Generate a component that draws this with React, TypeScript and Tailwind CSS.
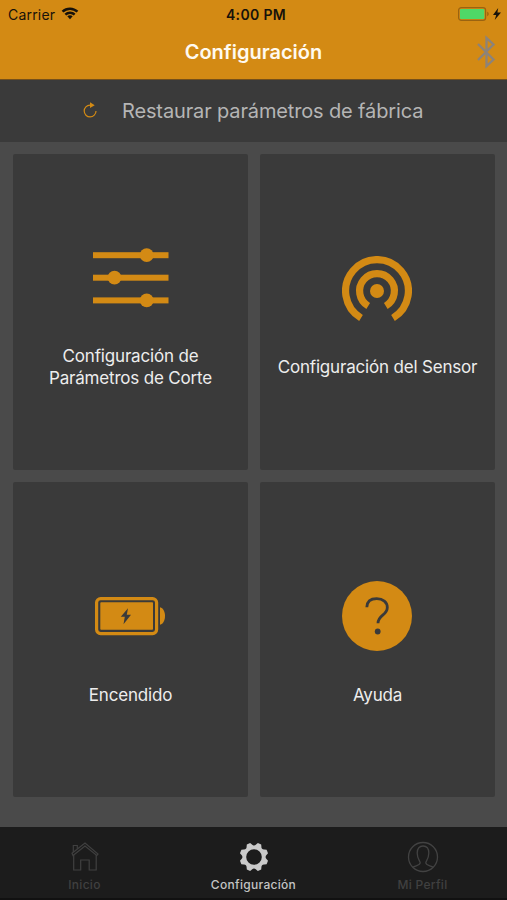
import React from "react";

const WifiIcon = () => (
  <svg width="18" height="14" viewBox="0 0 18 14" fill="#17120a">
    <path d="M9 0.5c3.2 0 6.100 1.250 8.300 3.300l-1.700 1.800A9.700 9.700 0 0 0 9 3a9.700 9.700 0 0 0-6.600 2.600L.7 3.800A12.100 12.100 0 0 1 9 .5Z" />
    <path d="M9 4.500c2.100 0 4 .8 5.500 2.200l-1.700 1.800A5.600 5.600 0 0 0 9 7a5.600 5.600 0 0 0-3.800 1.500L3.500 6.700A8 8 0 0 1 9 4.500Z" />
    <path d="M9 8.300c1 0 2 .4 2.700 1L9 12.300l-2.700-3c.7-.6 1.700-1 2.700-1Z" />
  </svg>
);

const BatteryStatusIcon = () => (
  <svg width="46" height="16" viewBox="0 0 46 16">
    <rect x="1.600" y="1.600" width="27" height="12.800" rx="2.700" fill="none" stroke="#9a6311" strokeWidth="1.200" />
    <rect x="3" y="3" width="24.300" height="10" rx="1" fill="#4fd867" />
    <path d="M30.200 5.800c2 .6 2 3.800 0 4.400Z" fill="#9a6311" />
    <path d="M41.200 2 36 8.900h3.200l-1.500 5 6.300-7.300h-3.600Z" fill="#17120a" />
  </svg>
);

const BluetoothIcon = () => (
  <svg width="20" height="34" viewBox="0 0 20 34" fill="none" stroke="#8c837a" strokeWidth="2.300">
    <path d="M2 9l15.500 15.500L10.500 31V3l7 6.500L2 25" />
  </svg>
);

const RestoreIcon = () => (
  <svg className="mb-[3px]" width="16" height="18" viewBox="0 0 16 18">
    <path d="M8 4.100a5.900 5.900 0 1 0 6 5.900" fill="none" stroke="#d38a14" strokeWidth="1.200" />
    <path d="M8 1.200 12.700 4.200 8 7Z" fill="#d38a14" />
  </svg>
);

const SlidersIcon = () => (
  <svg className="mb-0.5" width="76" height="62" viewBox="0 0 76 62" fill="#d38a14">
    <rect x="0" y="5.200" width="75.500" height="6" />
    <circle cx="53.700" cy="8.200" r="6.900" />
    <rect x="0" y="27.700" width="75.500" height="6" />
    <circle cx="21.500" cy="30.700" r="6.900" />
    <rect x="0" y="50.400" width="75.500" height="6" />
    <circle cx="53.700" cy="53.400" r="6.900" />
  </svg>
);

const SensorIcon = () => (
  <svg className="mt-0.5 mr-px" width="70" height="70" viewBox="0 0 70 70" fill="none" stroke="#d38a14" strokeWidth="7.200">
    <circle cx="35" cy="35" r="7" fill="#d38a14" stroke="none" />
    <path d="M26.200 50a17.400 17.400 0 1 1 17.600 0" />
    <path d="M19 62a31.400 31.400 0 1 1 32 0" />
  </svg>
);

const BatteryIcon = () => (
  <svg className="mb-1" width="72" height="40" viewBox="0 0 72 40">
    <rect x="1.600" y="2.600" width="60" height="35" rx="4" fill="none" stroke="#d38a14" strokeWidth="3.200" />
    <rect x="5.300" y="6.300" width="52.700" height="27.500" rx="0.800" fill="#d38a14" />
    <path d="M65 11.300c6.700 1.500 6.700 16 0 17.500Z" fill="#d38a14" />
    <path d="M33 12.300 25.800 20.800h4l-1.300 7.500 7.500-9.500h-4.200Z" fill="#3a3a3a" />
  </svg>
);

const HelpIcon = () => (
  <svg className="mr-px mb-[3px]" width="70" height="70" viewBox="0 0 70 70">
    <circle cx="35" cy="35" r="35" fill="#d38a14" />
    <path
      d="M24.800 26.300C25 20.500 29 17.700 34.700 17.700c6.300 0 10.600 3.500 10.600 8.700 0 8-9.300 7.500-9.300 15.800"
      fill="none"
      stroke="#3a3a3a"
      strokeWidth="2.800"
    />
    <circle cx="35.700" cy="50.500" r="2.900" fill="#3a3a3a" />
  </svg>
);

const HomeIcon = () => (
  <svg width="28" height="30" viewBox="0 0 28 30" fill="none" stroke="#404040" strokeWidth="1.200">
    <path d="M1 11.300 14 1l13 11-1.200 1.500L14 4 2 13.500Z" />
    <path d="M2.300 10V3.500h4v3.300" />
    <path d="M2.700 13v15h7V18h8.500v10h7V13" />
  </svg>
);

// eight teeth around the rim, offset by half a step
const toothAngles = [22.5, 67.5, 112.5, 157.5, 202.5, 247.5, 292.5, 337.5];

const GearIcon = () => (
  <svg width="30" height="30" viewBox="-15 -15 30 30">
    <circle r="9.700" fill="none" stroke="#cacaca" strokeWidth="3.800" />
    {toothAngles.map((angle) => (
      <path key={angle} d="M-4-10.300-1.800-14.400h3.600L4-10.300Z" fill="#cacaca" transform={`rotate(${angle})`} />
    ))}
  </svg>
);

const ProfileIcon = () => (
  <svg width="32" height="32" viewBox="0 0 32 32" fill="none" stroke="#424242" strokeWidth="1.300">
    <circle cx="16" cy="16" r="14.500" />
    <path d="M5.800 26.300c2.200-1.800 7.400-1.800 7.400-4.500 0-2-3-3.500-3-9.800C10.200 7.300 12.500 5 16 5s5.800 2.300 5.800 7c0 6.300-3 7.800-3 9.800 0 2.700 5.200 2.700 7.400 4.500" />
  </svg>
);

interface CardProps {
  icon: React.ReactNode;
  children: React.ReactNode;
}

const Card: React.FC<CardProps> = ({ icon, children }) => (
  <button className="flex flex-col items-center justify-center rounded-[2px] bg-[#3a3a3a] pt-[9px] text-[17px] leading-[22px] tracking-[-0.18px] text-[#ededed]">
    <div className="mb-[30px] flex h-[72px] items-center">{icon}</div>
    <span>{children}</span>
  </button>
);

export default function App() {
  return (
    <div className="flex h-[900px] w-[507px] flex-col overflow-hidden bg-[#4a4a4a] font-['Inter',sans-serif]">
      <header className="h-20 shrink-0 border-b border-[#75501a] bg-[#d38a14]">
        <div className="grid h-7 grid-cols-3 items-center pl-2 text-[14px] text-[#17120a]">
          <div className="flex items-center gap-[6px]">
            <span className="tracking-[0.2px]">Carrier</span>
            <WifiIcon />
          </div>
          <span className="pr-[3px] text-center font-semibold tracking-[0.35px]">4:00 PM</span>
          <div className="flex justify-end pr-[4px]">
            <BatteryStatusIcon />
          </div>
        </div>
        <div className="grid h-12 grid-cols-[40px_1fr_40px] items-center">
          <span />
          <h1 className="text-center text-[20px] font-semibold text-[#fffaf0]">Configuración</h1>
          <div className="flex justify-end pr-[11px]">
            <BluetoothIcon />
          </div>
        </div>
      </header>

      <button className="flex h-[62px] shrink-0 items-center bg-[#3a3a3a] pl-[82px] text-[20px] text-[#b5b5b5]">
        <RestoreIcon />
        <span className="ml-6 tracking-[-0.14px]">Restaurar parámetros de fábrica</span>
      </button>

      <main className="grid flex-1 grid-cols-2 grid-rows-2 gap-3 pt-3 pr-3 pb-[30px] pl-[13px]">
        <Card icon={<SlidersIcon />}>
          Configuración de
          <br />
          Parámetros de Corte
        </Card>
        <Card icon={<SensorIcon />}>Configuración del Sensor</Card>
        <Card icon={<BatteryIcon />}>Encendido</Card>
        <Card icon={<HelpIcon />}>Ayuda</Card>
      </main>

      <nav className="grid h-[73px] shrink-0 grid-cols-3 border-b-2 border-[#111111] bg-[#1c1c1c] pt-[14px] text-[12px] leading-4 font-medium tracking-[0.3px] text-[#404040]">
        <button className="flex flex-col items-center">
          <div className="flex h-8 items-center">
            <HomeIcon />
          </div>
          <span className="mt-1">Inicio</span>
        </button>
        <button className="flex flex-col items-center text-[#c4c4c4]">
          <div className="flex h-8 items-center">
            <GearIcon />
          </div>
          <span className="mt-1">Configuración</span>
        </button>
        <button className="flex flex-col items-center">
          <div className="flex h-8 items-center">
            <ProfileIcon />
          </div>
          <span className="mt-1">Mi Perfil</span>
        </button>
      </nav>
    </div>
  );
}
